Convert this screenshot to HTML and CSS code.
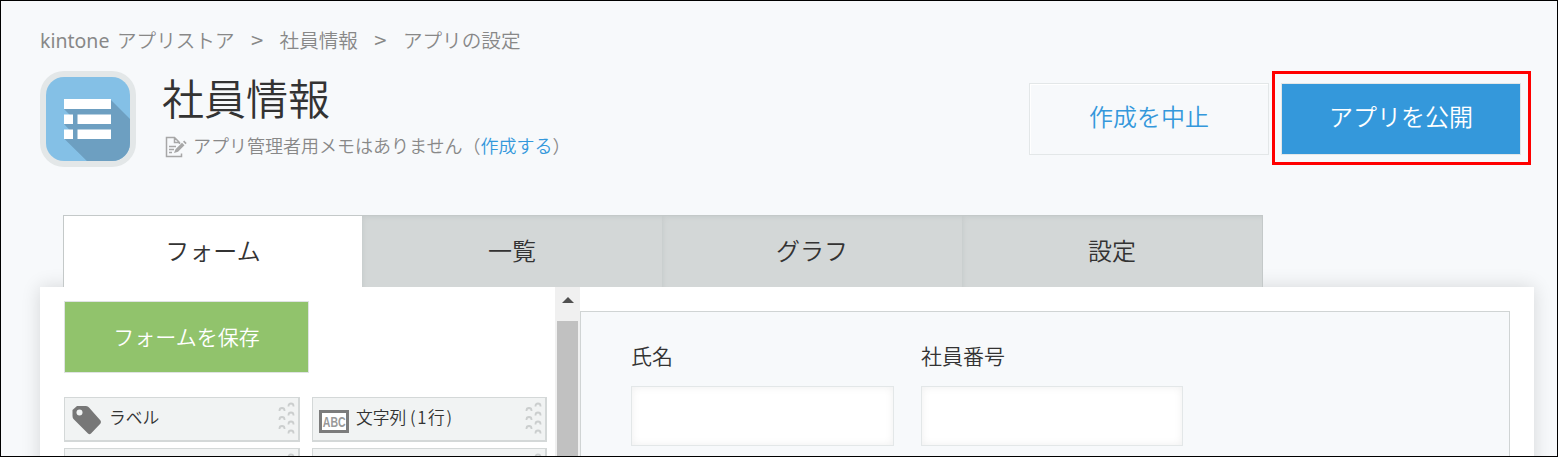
FILE: index.html
```html
<!DOCTYPE html>
<html lang="ja">
<head>
<meta charset="utf-8">
<title>アプリの設定</title>
<link rel="stylesheet" href="styles.css">
</head>
<body>
<svg class="defs" width="0" height="0">
  <symbol id="grip" viewBox="0 0 17 35">
    <g fill="none" stroke="#cbcece" stroke-width="1.800">
      <path d="M10.500 4.500V4Q10.500 1.500 13 1.500T15.500 4V4.500M10.500 13.500V13Q10.500 10.500 13 10.500T15.500 13V13.500M10.500 22.500V22Q10.500 19.500 13 19.500T15.500 22V22.500M10.500 31.500V31Q10.500 28.500 13 28.500T15.500 31V31.500"/>
      <path d="M1.500 9V8.500Q1.500 6 4 6T6.500 8.500V9M1.500 18V17.500Q1.500 15 4 15T6.500 17.500V18M1.500 27V26.500Q1.500 24 4 24T6.500 26.500V27"/>
    </g>
  </symbol>
</svg>
<div class="page">
  <nav class="breadcrumb">
    <a class="crumb-store"><span class="latin">kintone</span>アプリストア</a>
    <span class="sep">&gt;</span>
    <a>社員情報</a>
    <span class="sep">&gt;</span>
    <a>アプリの設定</a>
  </nav>
  <header class="header">
    <svg class="app-icon" viewBox="0 0 96 96">
      <rect width="96" height="96" rx="24" fill="#e3e7e8"/>
      <clipPath id="tile"><rect x="6" y="6" width="84" height="84" rx="18"/></clipPath>
      <g clip-path="url(#tile)">
        <rect x="6" y="6" width="84" height="84" fill="#84c0e6"/>
        <path d="M71 29L96 54V96H53L24 67.500L33 62.500L24 53L33 47L24 38L60 29Z" fill="#6d9fc1"/>
      </g>
      <path d="M24 28h47v10H24zM24 43.500h9V53h-9zM37.500 43.500H71V53H37.500zM24 58.500h9V68h-9zM37.500 58.500H71V68H37.500z" fill="#fff"/>
    </svg>
    <div class="heading">
      <h1 class="title">社員情報</h1>
      <div class="memo">
        <svg class="memo-icon" viewBox="0 0 22 22" fill="none" stroke="#a7a7a7" stroke-width="1.500">
          <path d="M16.500 17.500V20.500H1.500V1.500H9.500L14.500 6.500V8M9.500 1.500V6.500H14.500M4 10.500H11M4 13.500H9M4 16.500H7"/>
          <path d="M17 6.800L19.500 9.300L13 15.800L9 17L10.500 13.300ZM18 5.800L19.200 4.600L21.700 7.100L20.500 8.300Z" fill="#a7a7a7" stroke="none"/>
        </svg>
        <span class="memo-text">アプリ管理者用メモはありません（<a class="link">作成する</a>）</span>
      </div>
    </div>
    <div class="actions">
      <button class="btn btn-cancel">作成を中止</button>
      <div class="highlight"><button class="btn btn-publish">アプリを公開</button></div>
    </div>
  </header>
  <div class="tabs">
    <div class="tab active">フォーム</div>
    <div class="tab">一覧</div>
    <div class="tab">グラフ</div>
    <div class="tab">設定</div>
  </div>
  <main class="panel">
    <aside class="palette">
      <button class="save">フォームを保存</button>
      <div class="tools">
        <div class="tool">
          <svg class="tool-icon" viewBox="0 0 30 30"><path d="M5 1H14Q16 1 17 2.500L28.500 15.500Q29.500 17 28.500 18.500L19 28.500Q17.500 30 16 28.500L1.500 14Q0.500 13 0.500 11V5Z" fill="#777"/><circle cx="7.500" cy="7.500" r="3" fill="#f1f3f3"/></svg>
          <span class="tool-label">ラベル</span>
          <svg class="grip"><use href="#grip"/></svg>
        </div>
        <div class="tool">
          <span class="abc"><span class="abc-text">ABC</span></span>
          <span class="tool-label">文字列 <span class="lines">(1行)</span></span>
          <svg class="grip"><use href="#grip"/></svg>
        </div>
        <div class="tool"><svg class="grip"><use href="#grip"/></svg></div>
        <div class="tool"><svg class="grip"><use href="#grip"/></svg></div>
      </div>
    </aside>
    <div class="scrollbar">
      <svg class="arrow" viewBox="0 0 12 6"><path d="M6 0L12 6H0Z" fill="#505050"/></svg>
      <div class="thumb"></div>
    </div>
    <section class="canvas">
      <div class="field"><label>氏名</label><div class="input"></div></div>
      <div class="field"><label>社員番号</label><div class="input"></div></div>
    </section>
  </main>
</div>
</body>
</html>
```
FILE: styles.css
```css
* { box-sizing: border-box; }
body { margin: 0; }
.defs { position: absolute; }
.page {
  width: 1558px;
  height: 457px;
  border: 1px solid #000;
  background: #f7f9fb;
  overflow: hidden;
  display: flex;
  flex-direction: column;
  color: #333;
  font-family: "Noto Sans CJK JP", sans-serif;
  font-weight: 350;
}
.breadcrumb {
  display: flex;
  padding: 25px 0 0 39px;
  height: 70px;
  flex: none;
  line-height: 28px;
  font-size: 19.6px;
  color: #888;
  white-space: nowrap;
}
.latin {
  display: inline-block;
  width: 77px;
  font-family: "Noto Sans", sans-serif;
  font-size: 19.5px;
  font-weight: 400;
}
.sep {
  width: 45px;
  text-align: center;
  font-family: "DejaVu Sans", sans-serif;
  font-size: 17px;
  font-weight: 400;
}
.header {
  display: flex;
  height: 96px;
  flex: none;
  padding: 0 26px 0 39px;
}
.app-icon { width: 96px; height: 96px; flex: none; }
.heading { padding-left: 26px; }
.title { margin: 0; font-size: 42px; line-height: 52px; font-weight: 350; }
.memo {
  display: flex;
  align-items: center;
  height: 34px;
  margin-top: 5px;
  padding-left: 3px;
  gap: 6px;
  font-size: 18px;
  color: #888;
}
.memo-icon { width: 22px; height: 22px; margin-top: 3px; flex: none; }
.link { color: #3498db; }
.actions { display: flex; margin-left: auto; align-items: flex-start; }
.btn {
  width: 240px;
  height: 72px;
  padding: 0 0 7px;
  border: 1px solid #e3e7e8;
  font: 350 24px "Noto Sans CJK JP", sans-serif;
}
.btn-cancel {
  margin: 12px 3px 0 0;
  color: #3498db;
  background: #f7f9fb;
  box-shadow: inset 1px 1px 1px #fff;
}
.btn-publish { display: block; color: #fff; background: #3498db; }
.highlight {
  width: 259px;
  height: 94px;
  border: 3px solid #f00;
  padding: 9px 0 0 6px;
}
.tabs {
  display: grid;
  grid-template-columns: 299px 300px 300px 301px;
  width: 1200px;
  height: 72px;
  margin: 48px 0 0 62px;
  flex: none;
  position: relative;
  z-index: 1;
}
.tab {
  border-top: 1px solid #c4c9c9;
  background: #d3d7d7;
  box-shadow: inset 3px 3px 5px -2px #c5caca;
  text-align: center;
  font-size: 24px;
  line-height: 68px;
}
.tab.active { background: #fff; border-left: 1px solid #c4c9c9; box-shadow: none; }
.tab:last-child { border-right: 1px solid #c4c9c9; }
.panel {
  display: flex;
  width: 1494px;
  height: 190px;
  margin-left: 39px;
  flex: none;
  background: #fff;
  box-shadow: 0 0 18px rgba(0, 0, 0, .14);
}
.palette { width: 515px; padding: 14px 0 0 24px; flex: none; }
.save {
  display: block;
  width: 245px;
  height: 72px;
  padding: 0 0 3px;
  border: 1px solid #dfe3e3;
  background: #91c36c;
  color: #fff;
  font: 350 21px "Noto Sans CJK JP", sans-serif;
}
.tools {
  display: grid;
  grid-template-columns: 236px 235px;
  grid-auto-rows: 45px;
  gap: 6px 12px;
  margin-top: 24px;
}
.tool {
  display: flex;
  align-items: flex-start;
  border: 2px solid #d4d8d8;
  border-width: 1.5px 2px 2px 1.5px;
  background: #f1f3f3;
  padding: 4px 3px 0 7px;
  font-size: 16.8px;
}
.tool-icon { width: 30px; height: 30px; margin-top: 3px; flex: none; }
.tool-label { margin-left: 7px; line-height: 30px; white-space: nowrap; }
.lines { letter-spacing: 1.6px; }
.grip { width: 17px; height: 35px; margin-left: auto; flex: none; }
.abc {
  width: 30px;
  height: 23px;
  margin: 8px 0 0 -1px;
  border: 3px solid #7c7c7c;
  background: #fff;
  color: #999;
  font: 700 14px/18px "Liberation Sans", sans-serif;
  display: flex;
  justify-content: center;
}
.abc-text { transform: scaleX(.75); }
.scrollbar {
  width: 25px;
  flex: none;
  background: #f0f0f0;
  padding: 10px 2px 0;
  display: flex;
  flex-direction: column;
}
.arrow { width: 12px; height: 6px; margin: 0 0 18px 5px; flex: none; }
.thumb { width: 21px; flex: 1; background: #c1c1c1; }
.canvas {
  display: flex;
  gap: 27px;
  width: 930px;
  margin-top: 24px;
  padding: 26px 0 0 50px;
  border: 1px solid #d0d4d4;
  background: #f7f9fb;
}
.field label { display: block; height: 48px; font-size: 21px; line-height: 34px; }
.input {
  width: 263px;
  height: 60px;
  border: 1px solid #e3e7e8;
  background: #fff;
  box-shadow: inset 0 0 8px #efefef;
}
.field:last-child .input { width: 262px; }
```
